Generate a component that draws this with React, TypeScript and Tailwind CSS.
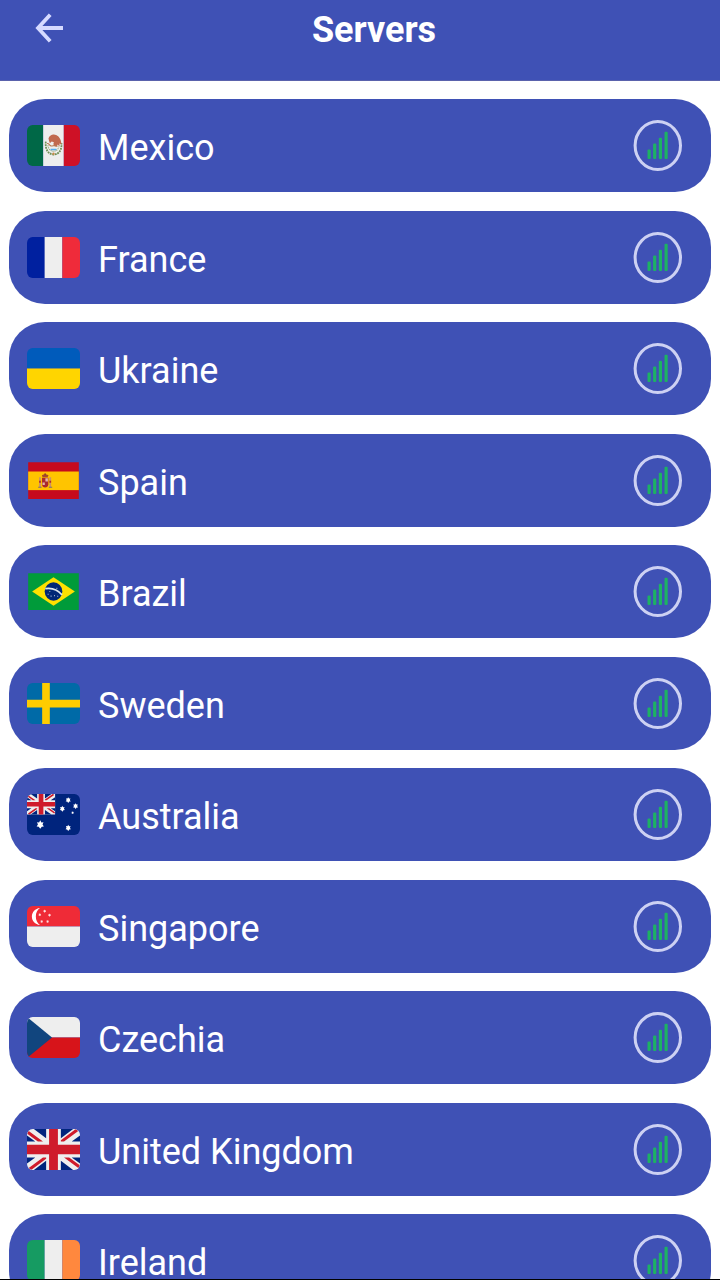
import type { ReactNode } from "react";

function FlagBox({ children, id, square }: { children: ReactNode; id: string; square?: boolean }) {
  return (
    <svg viewBox="0 0 36 26" preserveAspectRatio="none" className="w-[53px] h-[41px] shrink-0" aria-hidden="true">
      <clipPath id={id}>
        {square ? (
          <rect x="0.8" y="1.4" width="34.4" height="23.4" />
        ) : (
          <rect width="36" height="26" rx="3.8" />
        )}
      </clipPath>
      <g clipPath={`url(#${id})`}>{children}</g>
    </svg>
  );
}

function Stripes({ colors }: { colors: string[] }) {
  return (
    <>
      <rect width="12" height="26" fill={colors[0]} />
      <rect x="12" width="12" height="26" fill={colors[1]} />
      <rect x="24" width="12" height="26" fill={colors[2]} />
    </>
  );
}

function UnionJack() {
  return (
    <g transform="translate(0 -5)">
      <rect y="5" width="36" height="26" fill="#eee" />
      <path fill="#00247d" d="M0 9.06V13h5.63zM4.66 31H13v-5.84zM23 25.16V31h8.34zM0 23v3.94L5.63 23zM31.34 5H23v5.84zM36 26.94V23h-5.63zM36 13V9.06L30.37 13zM13 5H4.66L13 10.84z" />
      <path fill="#cf1b2b" d="M25.14 23l9.71 6.8c.47-.48.81-1.08.99-1.75L28.63 23zM13 23h-2.14l-9.71 6.8c.52.53 1.19.91 1.94 1.09L13 23.94zM23 13h2.14l9.71-6.8c-.52-.53-1.19-.91-1.94-1.09L23 12.06zM10.86 13L1.15 6.2C.68 6.68.34 7.28.16 7.95L7.37 13z" />
      <path fill="#cf1b2b" d="M21 15V5h-6v10H0v6h15v10h6V21h15v-6z" />
    </g>
  );
}

const STAR = "M0 -2 L.6 -1 L1.7 -1.1 L1.2 0 L1.9 1 L.8 1.1 L0 2.1 L-.8 1.1 L-1.9 1 L-1.2 0 L-1.7 -1.1 L-.6 -1Z";

const servers: { name: string; square?: boolean; flag: ReactNode }[] = [
  {
    name: "Mexico",
    flag: (
      <>
        <rect width="11" height="26" fill="#006847" />
        <rect x="11" width="14" height="26" fill="#eee" />
        <rect x="25" width="11" height="26" fill="#ce1126" />
        {/* laurel wreath, then the eagle */}
        <path d="M12.8 10.5c-.6 4 1 8 5.2 8.2c4 0 5.8-3.4 5.4-7.2" fill="none" stroke="#6f8f55" strokeWidth="1.2" strokeDasharray="1.2 .5" />
        <path d="M14.2 12.8c.3 2.6 1.8 3.8 3.8 3.8s3.3-1.2 3.7-3" fill="none" stroke="#9aa878" strokeWidth=".7" strokeDasharray=".8 .5" />
        <path d="M14.6 8.4c.9-2 2.8-2.700 4.300-2.200c2.500.3 4.300 2.500 4.500 6.200l-1.400-.7l.2 1.700l-1.700-1l.2 1.500l-2-.8c-.8-.5-1-1.400-.4-2.200l-1.500-.4l-1.300 1l-.6-1.700z" fill="#c1694f" />
        <path d="M13.6 11.800c1.500-.6 1.500 1.600 3 1.500s2.200-.6 3.500.2" fill="none" stroke="#b8774f" strokeWidth=".7" />
        <path d="M16 15.5h4" stroke="#55acee" strokeWidth="1" />
        <circle cx="18" cy="18.2" r=".8" fill="#c98a4b" />
      </>
    ),
  },
  { name: "France", flag: <Stripes colors={["#00209f", "#eee", "#ef2b3a"]} /> },
  {
    name: "Ukraine",
    flag: (
      <>
        <rect width="36" height="13" fill="#005bbb" />
        <rect y="13" width="36" height="13" fill="#ffd500" />
      </>
    ),
  },
  {
    name: "Spain",
    square: true,
    flag: (
      <>
        <rect width="36" height="26" fill="#c60a1d" />
        <rect y="7.3" width="36" height="11.8" fill="#ffc400" />
        <path d="M8.2 11h1.2v6.2H8.2zM15.2 11h1.2v6.2h-1.2z" fill="#c9906a" />
        <path d="M8.2 13.2h1.2v1.2H8.2zM15.2 13.2h1.2v1.2h-1.2z" fill="#b32a2f" />
        <path d="M10.2 11.2h4.3v4.3q-.3 1.9-2.2 1.9t-2.1-1.9z" fill="#aa2a2d" />
        <path d="M12.5 11.6h1.7v2h-1.7zM10.5 14.2h1.6v1.7h-1.6z" fill="#e3b5a8" />
        <path d="M10.6 10.9l-.5-1.3q2.2-1.2 4.5 0l-.6 1.3z" fill="#a5482a" />
        <circle cx="12.3" cy="9" r=".6" fill="#8c3a2a" />
        <path d="M7.6 17.3h2.3M14.8 17.3h2.3" stroke="#7d6b73" strokeWidth=".7" />
      </>
    ),
  },
  {
    name: "Brazil",
    square: true,
    flag: (
      <>
        <rect width="36" height="26" fill="#009b3a" />
        <path d="M18 4L32.5 13L18 22L3.5 13Z" fill="#fee100" />
        <ellipse cx="18" cy="13" rx="6" ry="5.8" fill="#002776" />
        <path d="M12.4 11.2c4.2-.7 8.4.7 11.4 3.9" fill="none" stroke="#dbe7ee" strokeWidth="1.1" />
        <path d="M14 14.7h.7M16 15.9h.7M18.4 15.6h.6M20.5 16h.7M15.2 13h.6M20 11h.6" stroke="#a9bdd8" strokeWidth=".7" />
      </>
    ),
  },
  {
    name: "Sweden",
    flag: (
      <>
        <rect width="36" height="26" fill="#006aa7" />
        <path d="M10.3 0h5.2v10.6H36v4.9H15.5V26h-5.2V15.5H0v-4.9h10.3z" fill="#fecc00" />
      </>
    ),
  },
  {
    name: "Australia",
    flag: (
      <>
        <rect width="36" height="26" fill="#00247d" />
        <g transform="scale(.53 .5)">
          <UnionJack />
        </g>
        <g fill="#fff">
          <path d={STAR} transform="translate(9 19.3) scale(1.3)" />
          <path d={STAR} transform="translate(28 3.8) scale(.9)" />
          <path d={STAR} transform="translate(24 9.3) scale(.9)" />
          <path d={STAR} transform="translate(33 7.6) scale(.9)" />
          <path d={STAR} transform="translate(28 21.4) scale(.95)" />
          <path d={STAR} transform="translate(31 11.8) scale(.45)" />
        </g>
      </>
    ),
  },
  {
    name: "Singapore",
    flag: (
      <>
        <rect width="36" height="13" fill="#ef2b37" />
        <rect y="13" width="36" height="13" fill="#eee" />
        <path d="M8.8 1.2c-3.2.3-5.5 2.6-5.5 5.4s2.3 5.1 5.5 5.4c-1.7-1-2.8-3-2.8-5.4s1.1-4.4 2.8-5.4z" fill="#fff" />
        <g fill="#fff" opacity=".85">
          <path d={STAR} transform="translate(12 3.2) scale(.5)" />
          <path d={STAR} transform="translate(8.7 5.5) scale(.5)" />
          <path d={STAR} transform="translate(15.3 5.8) scale(.5)" />
          <path d={STAR} transform="translate(10 9.8) scale(.5)" />
          <path d={STAR} transform="translate(14 9.8) scale(.5)" />
        </g>
      </>
    ),
  },
  {
    name: "Czechia",
    flag: (
      <>
        <rect width="36" height="13" fill="#eee" />
        <rect y="13" width="36" height="13" fill="#d7141a" />
        <path d="M0 0L17 13L0 26z" fill="#11457e" />
      </>
    ),
  },
  { name: "United Kingdom", flag: <UnionJack /> },
  { name: "Ireland", flag: <Stripes colors={["#169b62", "#eee", "#ff883e"]} /> },
];

function SignalIcon() {
  return (
    <svg viewBox="0 0 50 52" className="w-[50px] h-[52px] shrink-0" aria-hidden="true">
      <ellipse cx="24.8" cy="25.6" rx="22.7" ry="24" fill="none" stroke="#cdd1f3" strokeWidth="3" />
      <g fill="#1db263">
        <rect x="14.5" y="29.6" width="3.2" height="9.4" rx="1" />
        <rect x="20.1" y="23.4" width="3.2" height="15.6" rx="1" />
        <rect x="25.8" y="17.7" width="3.2" height="21.3" rx="1" />
        <rect x="31.5" y="11.7" width="3.2" height="27.3" rx="1" />
      </g>
    </svg>
  );
}

export default function App() {
  return (
    <div className="flex h-dvh flex-col border-b border-black bg-white font-['Roboto',sans-serif] text-white">
      <header className="flex h-[81px] shrink-0 items-center border-b border-[#5a62ac] bg-[#3f51b5] px-[35px] pb-5">
        <button type="button" aria-label="Back" className="pb-1">
          <svg viewBox="0 0 28 30" className="h-[30px] w-7" fill="none" stroke="#d6daff" strokeWidth="3.8">
            <path d="M15.2 1.8L3 15L15.2 28.2M3 15H28" />
          </svg>
        </button>
        <h1 className="flex-1 text-center text-4xl font-bold">Servers</h1>
      </header>

      <main className="flex-1 overflow-y-auto px-[9px] pt-[18px] [scrollbar-width:none]">
        <ul>
          {servers.map((server) => (
            <li key={server.name} className="odd:pb-[19px] even:pb-[18px]">
              <button type="button" className="flex h-[93px] w-full items-center rounded-[36px] bg-[#3f51b5] pr-7 pl-[18px]">
                <FlagBox id={`flag-${server.name.replace(" ", "-")}`} square={server.square}>
                  {server.flag}
                </FlagBox>
                <span className="flex-1 pt-1 pl-[18px] text-left text-4xl">{server.name}</span>
                <SignalIcon />
              </button>
            </li>
          ))}
        </ul>
      </main>
    </div>
  );
}
